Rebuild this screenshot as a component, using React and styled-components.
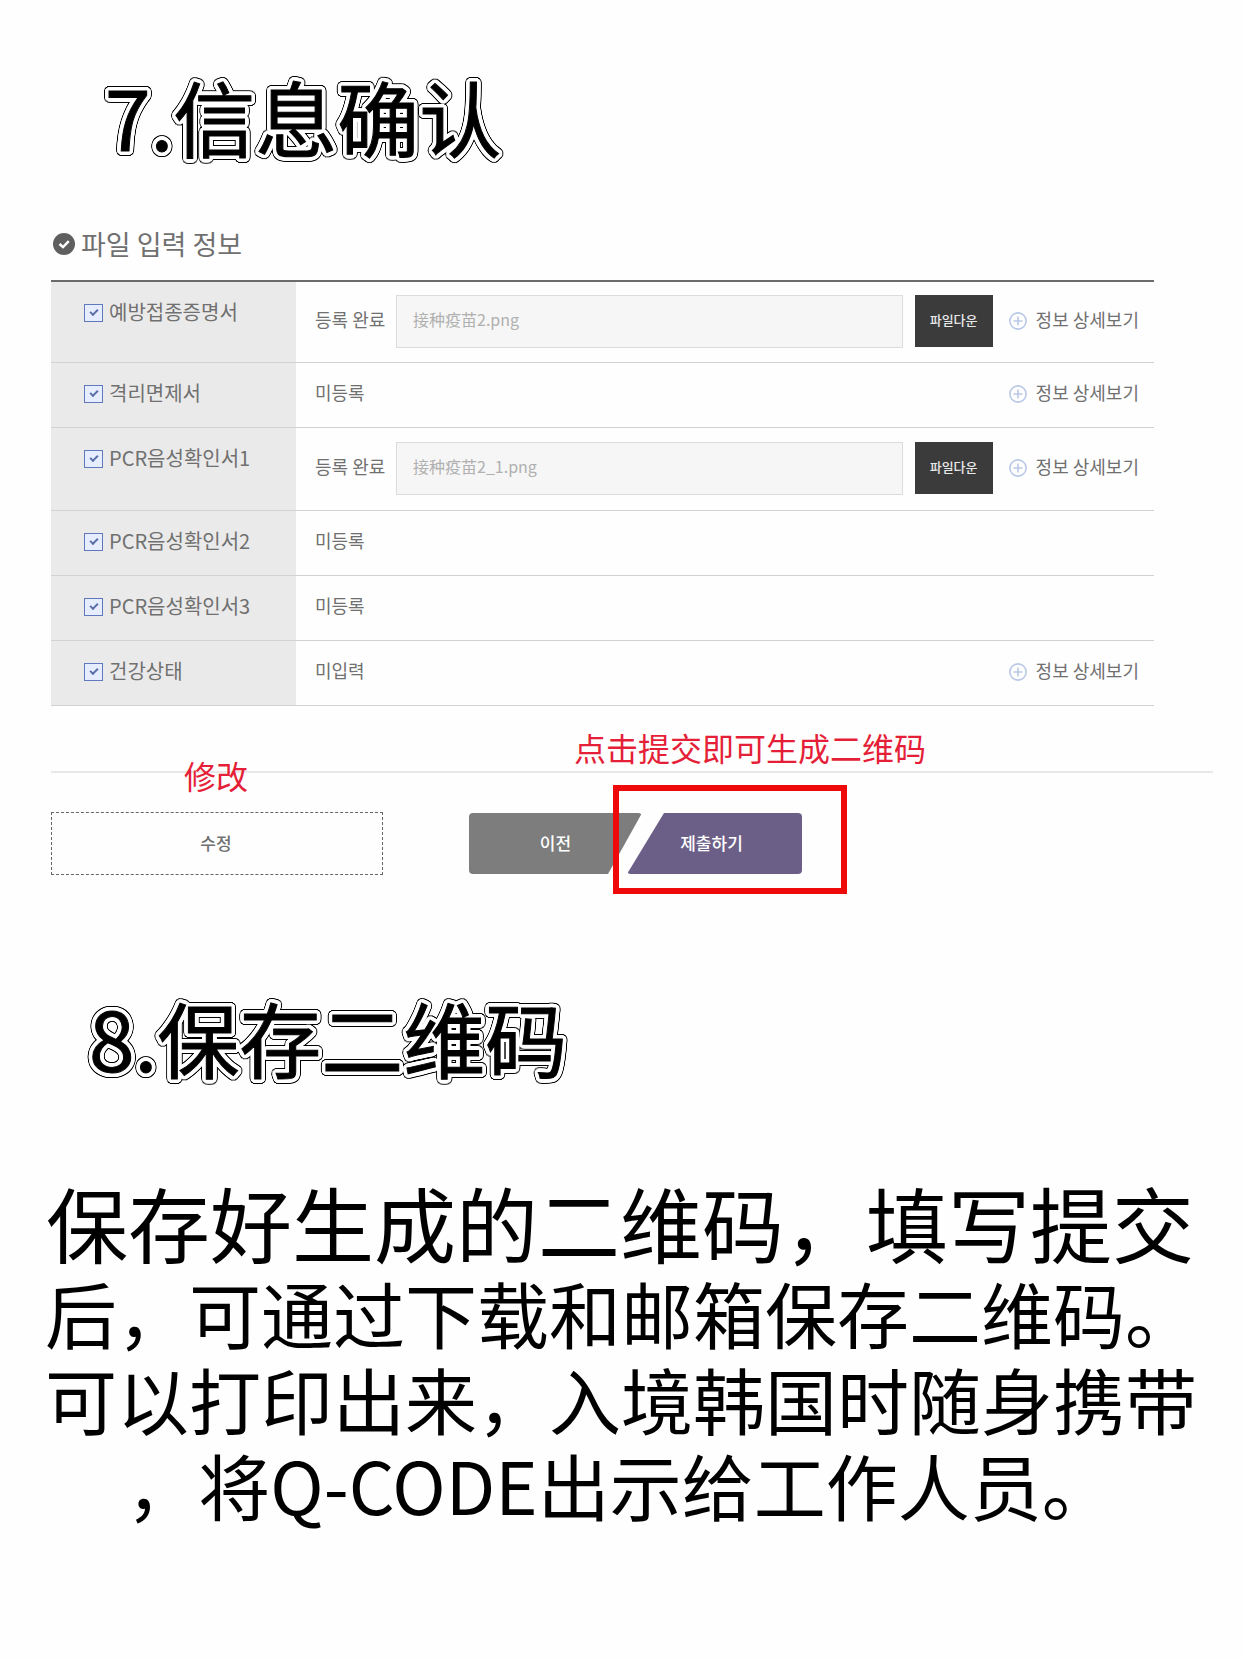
import React from "react";
import styled, { createGlobalStyle, css } from "styled-components";

const ring = (radius, color) =>
  Array.from({ length: 32 }, (_, i) => {
    const a = (i / 32) * Math.PI * 2;
    return `${(Math.cos(a) * radius).toFixed(2)}px ${(Math.sin(a) * radius).toFixed(2)}px 0 ${color}`;
  }).join(", ");

const outline = `${ring(2, "#fff")}, ${ring(4, "#fff")}, ${ring(5, "#000")}`;

const hans = `"Noto Sans CJK SC", sans-serif`;
const hangul = `"Noto Sans CJK KR", sans-serif`;

const Global = createGlobalStyle`
  *, *::before, *::after { box-sizing: border-box; }
  body { margin: 0; background: #fefefe; color: #000; font-family: ${hans}; }
`;

const Page = styled.main`
  padding: 60px 29px 128px 51px;
`;

const StepTitle = styled.h1`
  margin: 0;
  padding-left: ${(p) => p.$indent}px;
  font-size: 82px;
  line-height: 112px;
  font-weight: 400;
  -webkit-text-stroke: 1px #000;
  text-shadow: ${outline};
`;

const Form = styled.form`
  padding-top: 52px;
  font-family: ${hangul};
  color: #707070;
`;

const SectionTitle = styled.h2`
  display: flex;
  align-items: center;
  gap: 6px;
  margin: 0 0 16px;
  padding-left: 2px;
  font-size: 27px;
  line-height: 40px;
  font-weight: 400;
`;

const Table = styled.table`
  width: calc(100% - 59px);
  border-collapse: separate;
  border-spacing: 0;
  table-layout: fixed;
  border-top: 2px solid #6b6b6b;
`;

const line = css`
  border-bottom: 1px solid #d2d2d2;
`;

const NameCell = styled.th`
  ${line}
  width: 245px;
  padding: 14px 0 14px 33px;
  vertical-align: top;
  text-align: left;
  background: #eaeaea;
  font-weight: 400;
`;

const NameLabel = styled.label`
  display: flex;
  align-items: center;
  gap: 6px;
  font-size: 20px;
  line-height: 32px;
`;

const Check = styled.input`
  appearance: none;
  position: relative;
  flex: none;
  width: 19px;
  height: 18px;
  margin: 2px 0 0;
  border: 1px solid #6078bd;
  background: #e6edff;
  &:checked::after {
    content: "";
    position: absolute;
    left: 5px;
    top: 4px;
    width: 8px;
    height: 5px;
    border: solid #5a6ea8;
    border-width: 0 0 2px 2px;
    transform: rotate(-45deg);
  }
`;

const InfoCell = styled.td`
  ${line}
  height: ${(p) => (p.$tall ? 83 : 65)}px;
  padding: 0 15px 2px 19px;
  ${(p) => p.$first && "height: 81px;"}
`;

const InfoRow = styled.div`
  display: flex;
  align-items: center;
  font-size: 18px;
  line-height: 28px;
  white-space: nowrap;
`;

const Status = styled.span`
  width: 81px;
  flex: none;
  padding-bottom: 4px;
`;

const FileName = styled.input`
  flex: 1;
  min-width: 0;
  height: 53px;
  padding: 0 16px 4px;
  border: 1px solid #dcdcdc;
  border-radius: 0;
  background: #f6f6f6;
  color: #b0b0b0;
  font: 400 16px ${hans};
`;

const Download = styled.button`
  width: 78px;
  height: 52px;
  margin-left: 12px;
  padding: 0 0 3px;
  border: 0;
  background: #3b3b3b;
  color: #e8e8e8;
  font: 500 13px ${hangul};
`;

const Detail = styled.a`
  display: flex;
  align-items: center;
  gap: 9px;
  margin-left: ${(p) => (p.$push ? "auto" : "16px")};
  color: inherit;
  text-decoration: none;
`;

const DetailText = styled.span`
  padding-bottom: 4px;
`;

const Footer = styled.div`
  position: relative;
  margin-top: 65px;
  padding-top: 39px;
  border-top: 2px solid #e8e8e8;
  display: flex;
  align-items: center;
`;

const Note = styled.span`
  position: absolute;
  left: ${(p) => p.$left}px;
  top: ${(p) => p.$top}px;
  color: #e51f38;
  font: 400 32px/40px ${hans};
  white-space: nowrap;
`;

const Edit = styled.button`
  width: 332px;
  height: 63px;
  padding: 0 2px 3px 0;
  border: 1px dashed #666;
  background: transparent;
  color: #707070;
  font: 500 17px ${hangul};
`;

const Pair = styled.div`
  display: flex;
  margin-left: 86px;
`;

const Slanted = styled.button`
  width: ${(p) => p.$width}px;
  height: 61px;
  padding: 0 ${(p) => p.$right}px 3px 0;
  border: 0;
  border-radius: 4px;
  color: #fff;
  font: 500 17px ${hangul};
  background: ${(p) => p.$color};
  clip-path: polygon(${(p) => p.$shape});
`;

const Highlight = styled.div`
  position: relative;
  margin-left: -15px;
  &::after {
    content: "";
    position: absolute;
    left: -14px;
    top: -28px;
    right: -45px;
    bottom: -20px;
    border: 6px solid #ee0a0a;
    pointer-events: none;
  }
`;

const Step = styled.section`
  padding-top: ${(p) => p.$space}px;
`;

const Story = styled.div`
  margin: 82px 18px 0 -6px;
  text-align: center;
  white-space: nowrap;
`;

const Lead = styled.p`
  margin: 0;
  font-size: 82px;
  line-height: 94px;
`;

const Text = styled.p`
  margin: 0;
  font-size: 72px;
  line-height: 86px;
`;

const Badge = () => (
  <svg width="22" height="22" viewBox="0 0 22 22" aria-hidden="true">
    <circle cx="11" cy="11" r="11" fill="#5f5f5f" />
    <path d="M6.5 11 L10 14.2 L15.8 8.2" fill="none" stroke="#fff" strokeWidth="2.4" />
  </svg>
);

const Plus = () => (
  <svg width="18" height="18" viewBox="0 0 18 18" aria-hidden="true">
    <g fill="none" stroke="#b9c8e6" strokeWidth="1.6">
      <circle cx="9" cy="9" r="8.1" />
      <path d="M4.5 9h9M9 4.5v9" />
    </g>
  </svg>
);

const rows = [
  { name: "예방접종증명서", status: "등록 완료", file: "接种疫苗2.png", detail: true },
  { name: "격리면제서", status: "미등록", detail: true },
  { name: "PCR음성확인서1", status: "등록 완료", file: "接种疫苗2_1.png", detail: true },
  { name: "PCR음성확인서2", status: "미등록" },
  { name: "PCR음성확인서3", status: "미등록" },
  { name: "건강상태", status: "미입력", detail: true },
];

export default function App() {
  return (
    <Page>
      <Global />
      <StepTitle $indent={54}>7.信息确认</StepTitle>
      <Form onSubmit={(e) => e.preventDefault()}>
        <SectionTitle>
          <Badge />
          파일 입력 정보
        </SectionTitle>
        <Table>
          <tbody>
            {rows.map((row, i) => (
              <tr key={row.name}>
                <NameCell scope="row">
                  <NameLabel>
                    <Check type="checkbox" defaultChecked />
                    {row.name}
                  </NameLabel>
                </NameCell>
                <InfoCell $tall={Boolean(row.file)} $first={i === 0}>
                  <InfoRow>
                    <Status>{row.status}</Status>
                    {row.file && (
                      <>
                        <FileName readOnly aria-label={row.name} defaultValue={row.file} />
                        <Download type="button">파일다운</Download>
                      </>
                    )}
                    {row.detail && (
                      <Detail href="#detail" $push={!row.file}>
                        <Plus />
                        <DetailText>정보 상세보기</DetailText>
                      </Detail>
                    )}
                  </InfoRow>
                </InfoCell>
              </tr>
            ))}
          </tbody>
        </Table>
        <Footer>
          <Note $left={133} $top={-18}>修改</Note>
          <Note $left={523} $top={-46}>点击提交即可生成二维码</Note>
          <Edit type="button">수정</Edit>
          <Pair>
            <Slanted
              type="button"
              $width={173}
              $right={0}
              $color="#7d7d7d"
              $shape="0 0, 100% 0, 139px 100%, 0 100%"
            >
              이전
            </Slanted>
            <Highlight>
              <Slanted
                type="submit"
                $width={175}
                $right={6}
                $color="#6b5f87"
                $shape="37px 0, 100% 0, 100% 100%, 0 100%"
              >
                제출하기
              </Slanted>
            </Highlight>
          </Pair>
        </Footer>
      </Form>
      <Step $space={106}>
        <StepTitle as="h2" $indent={38}>8.保存二维码</StepTitle>
        <Story>
          <Lead>保存好生成的二维码，填写提交</Lead>
          <Text>后，可通过下载和邮箱保存二维码。</Text>
          <Text>可以打印出来，入境韩国时随身携带</Text>
          <Text>，将Q-CODE出示给工作人员。</Text>
        </Story>
      </Step>
    </Page>
  );
}
